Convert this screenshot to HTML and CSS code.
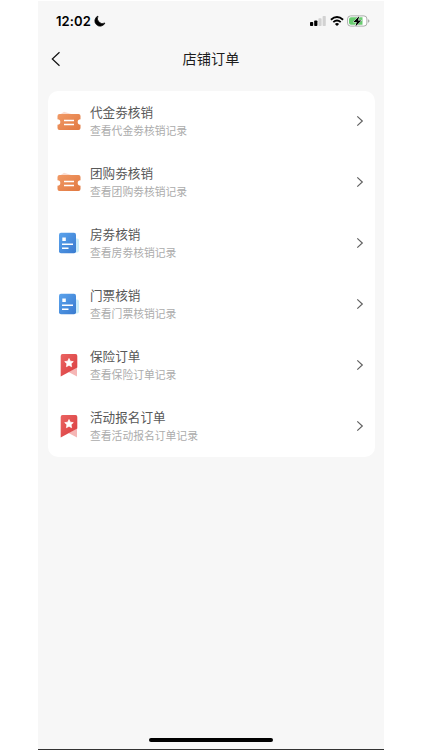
FILE: index.html
```html
<!DOCTYPE html>
<html lang="zh-CN">
<head>
<meta charset="utf-8">
<title>店铺订单</title>
<link rel="stylesheet" href="styles.css">
</head>
<body>
<svg class="defs" width="0" height="0" aria-hidden="true">
  <defs>
    <linearGradient id="orange" x1="0" y1="0" x2="1" y2="1"><stop offset="0" stop-color="#f19a66"/><stop offset="1" stop-color="#e17840"/></linearGradient>
    <linearGradient id="blue" x1="0" y1="0" x2="1" y2="1"><stop offset="0" stop-color="#5ba3ec"/><stop offset="1" stop-color="#397bd0"/></linearGradient>
    <linearGradient id="red" x1="0" y1="0" x2="1" y2="1"><stop offset="0" stop-color="#ea6462"/><stop offset="1" stop-color="#d93c3e"/></linearGradient>
    <symbol id="ticket" viewBox="0 0 24 24">
      <path d="M3 5.500 7 2.800 16 5.500Z" fill="#fbdcd0"/>
      <path d="M2.500 5h19q2 0 2 2v3.200a2.800 2.800 0 0 0 0 5.600V19q0 2-2 2h-19q-2 0-2-2v-3.200a2.800 2.800 0 0 0 0-5.600V7q0-2 2-2Z" fill="url(#orange)"/>
      <path d="M7 11.500h10M7 15.500h10" stroke="#fff" stroke-width="1.400"/>
    </symbol>
    <symbol id="doc" viewBox="0 0 24 24">
      <rect x="10" y="7.500" width="12" height="14" rx="2" fill="#c9edfb"/>
      <rect x="2" y="1.800" width="17" height="20.500" rx="2" fill="url(#blue)"/>
      <path d="M5.300 6.500h3.500v3.500H5.300Z" fill="#fff"/>
      <path d="M5 13.200h11M5 17.300h6.500" stroke="#fff" stroke-width="1.400"/>
    </symbol>
    <symbol id="ribbon" viewBox="0 0 24 24">
      <path d="M20 14v9.500L11.500 19Z" fill="#f5b6b5"/>
      <path d="M5.500 1h13Q20.300 1 20.300 3v11.500L3.700 23.500V3q0-2 1.800-2Z" fill="url(#red)"/>
      <path d="m12 5.500 1.300 2.700 3 .4-2.200 2.100.5 3-2.600-1.400-2.600 1.400.5-3-2.200-2.100 3-.4Z" fill="#fff" stroke="#fff" stroke-width=".7" stroke-linejoin="round"/>
    </symbol>
    <symbol id="chevron" viewBox="0 0 8 12"><path d="m1.300 1.400 5 4.600-5 4.600" fill="none" stroke="#606060" stroke-width="1.200"/></symbol>
  </defs>
</svg>
<main class="phone">
  <header class="status">
    <span class="time">12:02</span>
    <svg class="moon" viewBox="0 0 12 12"><path d="M4 1A5.300 5.300 0 1 0 11 8 5.200 5.200 0 0 1 4 1Z" stroke="#000" stroke-width=".7" stroke-linejoin="round"/></svg>
    <svg class="signal" viewBox="0 0 16 10"><rect x="0" y="6" width="3.200" height="4" rx=".8"/><rect x="4.200" y="4.500" width="3.200" height="5.500" rx=".8"/><g fill="#d2d2d2"><rect x="8.400" y="2.200" width="3.200" height="7.800" rx=".8"/><rect x="12.600" y="0" width="3.200" height="10" rx=".8"/></g></svg>
    <svg class="wifi" viewBox="0 0 14 10"><g fill="none" stroke="#000" stroke-width="1.900"><path d="M.9 3.700Q7-1.700 13.100 3.700"/><path d="M3.300 6.100q3.700-3.200 7.400 0"/></g><path d="M4.900 7.900Q7 6.300 9.100 7.900L7 10Z"/></svg>
    <svg class="battery" viewBox="0 0 23 12"><rect x=".6" y=".9" width="19.300" height="10.200" rx="3" fill="#fff" stroke="#a9aca9"/><path d="M4 2.300h11.500v7.400H4q-2 0-2-2V4.300q0-2 2-2Z" fill="#69cc70"/><path d="M21 4.200q1.500.5 1.500 1.800T21 7.800Z" fill="#a9aca9"/><path d="M12.300.9 6.300 6.900h3.400l-1.300 4.500 6-6H11Z" stroke="#fff" stroke-width="1" paint-order="stroke"/></svg>
  </header>
  <nav class="nav">
    <svg class="back" viewBox="0 0 10 16"><path d="M8.500 1.200 1.300 8l7.200 6.800" fill="none" stroke="#111" stroke-width="1.200"/></svg>
    <h1>店铺订单</h1>
  </nav>
  <ul class="card">
    <li><svg class="icon"><use href="#ticket"/></svg><div class="text"><h2>代金劵核销</h2><p>查看代金劵核销记录</p></div><svg class="chevron"><use href="#chevron"/></svg></li>
    <li><svg class="icon"><use href="#ticket"/></svg><div class="text"><h2>团购劵核销</h2><p>查看团购劵核销记录</p></div><svg class="chevron"><use href="#chevron"/></svg></li>
    <li><svg class="icon"><use href="#doc"/></svg><div class="text"><h2>房劵核销</h2><p>查看房劵核销记录</p></div><svg class="chevron"><use href="#chevron"/></svg></li>
    <li><svg class="icon"><use href="#doc"/></svg><div class="text"><h2>门票核销</h2><p>查看门票核销记录</p></div><svg class="chevron"><use href="#chevron"/></svg></li>
    <li><svg class="icon"><use href="#ribbon"/></svg><div class="text"><h2>保险订单</h2><p>查看保险订单记录</p></div><svg class="chevron"><use href="#chevron"/></svg></li>
    <li><svg class="icon"><use href="#ribbon"/></svg><div class="text"><h2>活动报名订单</h2><p>查看活动报名订单记录</p></div><svg class="chevron"><use href="#chevron"/></svg></li>
  </ul>
  <div class="home"></div>
</main>
</body>
</html>
```
FILE: styles.css
```css
* { box-sizing: border-box; margin: 0; padding: 0; }
body { background: #fff; font-family: "Liberation Sans", "Noto Sans CJK SC", sans-serif; overflow: hidden; }
.defs { display: block; }
.phone {
  display: flex;
  flex-direction: column;
  width: 346px;
  height: 749px;
  margin: 1px 0 0 38px;
  background: #f7f7f7;
  border-bottom: 1px solid #333;
}
.status { display: flex; align-items: center; height: 39px; padding: 0 14px 0 18px; }
.time { width: 36px; font: 600 13px/16px Inter, sans-serif; letter-spacing: 0.1px; white-space: nowrap; }
.moon { width: 12px; height: 12px; margin-left: 2px; }
.signal { width: 16px; height: 10px; margin-left: auto; }
.wifi { width: 14px; height: 10px; margin-left: 4px; }
.battery { width: 23px; height: 12px; margin-left: 3px; }
.nav { display: grid; grid-template-columns: 40px 1fr 40px; align-items: center; height: 38px; }
.back { width: 10px; height: 16px; margin-left: 13px; }
.nav h1 { font-size: 14.2px; font-weight: 400; line-height: 20px; color: #1c1c1c; text-align: center; }
.card { margin: 13px 9px 0 10px; background: #fff; border-radius: 10px; list-style: none; }
.card li { display: flex; align-items: center; height: 61px; padding: 0 11px 1px 9px; }
.icon { width: 24px; height: 24px; flex: none; }
.text { flex: 1; margin-left: 9px; padding-top: 1px; }
.text h2 { font-size: 12.6px; font-weight: 400; line-height: 18px; color: #585858; }
.text p { margin-top: 1px; font-size: 10.8px; line-height: 16px; color: #acacac; }
.chevron { width: 8px; height: 12px; flex: none; }
.home { width: 124px; height: 4px; margin: auto auto 7px; background: #000; border-radius: 2px; }
```
